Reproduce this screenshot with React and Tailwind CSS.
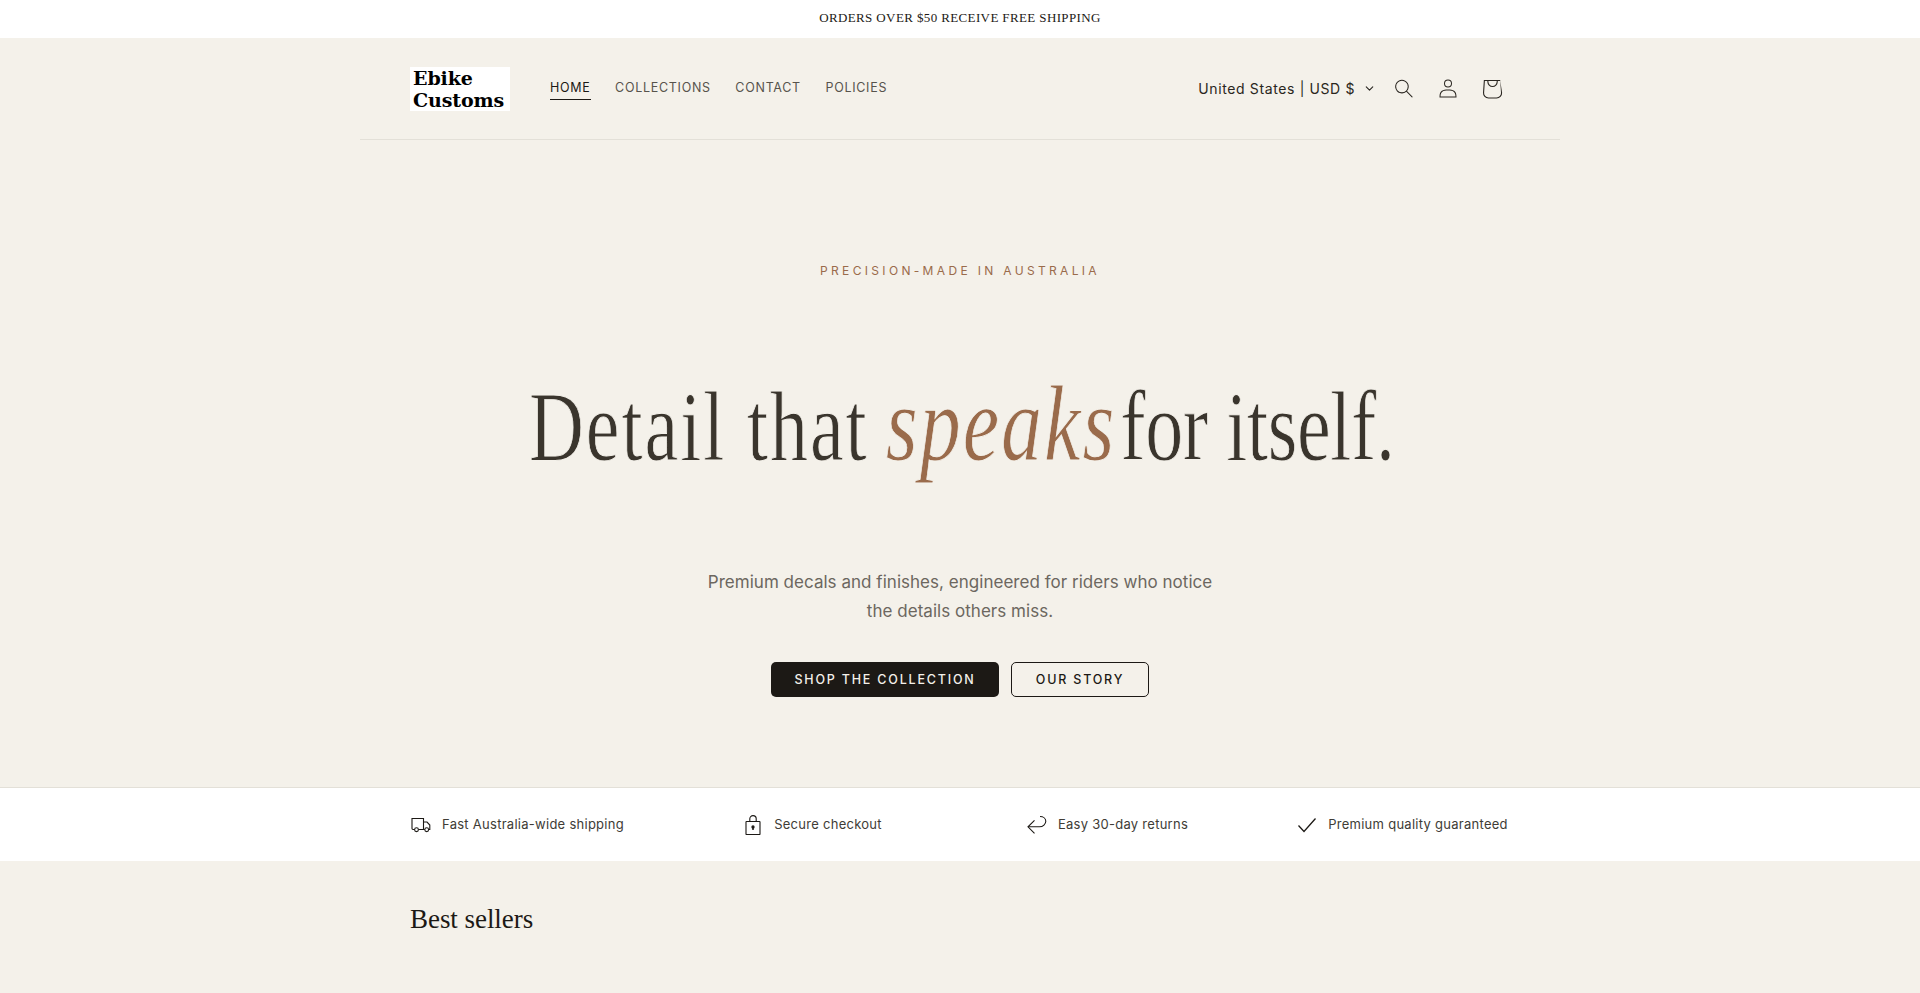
import { ChevronDown } from "lucide-react";

const navLinks = ["COLLECTIONS", "CONTACT", "POLICIES"];

function SearchIcon() {
  return (
    <svg viewBox="0 0 18 19" className="w-[18px] h-[19px]" fill="currentColor">
      <path
        fillRule="evenodd"
        clipRule="evenodd"
        d="M11.03 11.68A5.784 5.784 0 112.85 3.5a5.784 5.784 0 018.18 8.18zm.26 1.12a6.78 6.78 0 11.72-.7l5.4 5.4a.5.5 0 11-.71.7l-5.41-5.4z"
      />
    </svg>
  );
}

function AccountIcon() {
  return (
    <svg viewBox="0 0 18 19" className="w-[18px] h-[19px]" fill="currentColor">
      <path
        fillRule="evenodd"
        clipRule="evenodd"
        d="M6 4.5a3 3 0 116 0 3 3 0 01-6 0zm3-4a4 4 0 100 8 4 4 0 000-8zm5.58 12.15c1.12.82 1.83 2.24 1.91 4.85H1.51c.08-2.6.79-4.03 1.9-4.85C4.66 11.75 6.5 11.5 9 11.5s4.35.26 5.58 1.15zM9 10.5c-2.5 0-4.65.24-6.17 1.35C1.27 12.98.5 14.93.5 18v.5h17V18c0-3.07-.77-5.02-2.33-6.15-1.52-1.1-3.67-1.35-6.17-1.35z"
      />
    </svg>
  );
}

function CartIcon() {
  return (
    <svg viewBox="0 0 40 40" className="w-11 h-11" fill="currentColor">
      <path
        fillRule="evenodd"
        clipRule="evenodd"
        d="M15.75 11.8h-3.16l-.77 11.6a5 5 0 0 0 4.99 5.34h7.38a5 5 0 0 0 4.99-5.33L27.41 11.8zm0 1h-2.22l-.71 10.67a4 4 0 0 0 3.99 4.27h7.38a4 4 0 0 0 4-4.27l-.72-10.67h-2.22v.63a4.75 4.75 0 1 1-9.5 0zm8.5 0h-7.5v.63a3.75 3.75 0 1 0 7.5 0z"
      />
    </svg>
  );
}

function TruckIcon() {
  return (
    <svg viewBox="0 0 20 18" className="w-5 h-[18px]" fill="none" stroke="#1c1915" strokeWidth="1.1">
      <path d="M3.6 13.500H2a1 1 0 0 1-1-1V2.500h11.500v11H7.500" />
      <path d="M12.500 6h3.500l2.800 3v4.500h-1.300" />
      <path d="M13.800 13.500h-1.300" />
      <circle cx="5.500" cy="13.700" r="1.900" />
      <circle cx="15.700" cy="13.700" r="1.900" />
    </svg>
  );
}

function LockIcon() {
  return (
    <svg viewBox="0 0 20 20" className="w-5 h-5" fill="none" stroke="#1c1915" strokeWidth="1.1">
      <rect x="3" y="6.500" width="14" height="13" rx="0.5" />
      <path d="M6.800 6.500V3.800a3.200 3.200 0 0 1 6.400 0v2.700" />
      <circle cx="10" cy="12" r="1.100" fill="#1c1915" />
      <path d="M10 12v3" strokeWidth="1.500" />
    </svg>
  );
}

function ReturnIcon() {
  return (
    <svg viewBox="0 0 20 20" className="w-5 h-5" fill="none" stroke="#1c1915" strokeWidth="1.1">
      <path d="M13 1.500c3.200 0 5.800 2 5.800 4.800S16 11.800 12.500 11.800H1" />
      <path d="M7.500 5.300L1 11.800l6.500 6.500" />
    </svg>
  );
}

function CheckIcon() {
  return (
    <svg viewBox="0 0 20 20" className="w-5 h-5" fill="none" stroke="#1c1915" strokeWidth="1.300">
      <path d="M1.500 10.500l5.500 6L18.500 3.500" />
    </svg>
  );
}

const perks = [
  { icon: <TruckIcon />, label: "Fast Australia-wide shipping" },
  { icon: <LockIcon />, label: "Secure checkout" },
  { icon: <ReturnIcon />, label: "Easy 30-day returns" },
  { icon: <CheckIcon />, label: "Premium quality guaranteed" },
];

export default function App() {
  return (
    <div className="min-h-[993px] bg-[#f4f1ea] font-['Inter',sans-serif] text-[#1c1915] overflow-hidden">
      {/* announcement */}
      <div className="h-[38px] pb-[2px] bg-white flex items-center justify-center font-['Liberation_Serif',serif] text-[13px] tracking-[0.38px] text-[#1c1915]">
        ORDERS OVER $50 RECEIVE FREE SHIPPING
      </div>

      {/* header */}
      <header className="w-[1200px] ml-[360px] h-[102px] border-b border-[#e3e0d8] px-[50px] flex items-center justify-between">
        <div className="flex items-center">
          <div className="w-[100px] h-11 bg-white pl-[3px] font-['DejaVu_Serif',serif] font-bold text-[19px] leading-[22px] tracking-[-0.1px] text-black">
            Ebike
            <br />
            Customs
          </div>
          <nav className="ml-10 mt-[2px] flex items-center gap-[24.5px] text-[12.5px] tracking-[0.72px] text-[#57534c]">
            <a className="text-[#1c1915] border-b border-[#1c1915] pb-[1px]">HOME</a>
            {navLinks.map((link) => (
              <a key={link} className="pb-[2px]">
                {link}
              </a>
            ))}
          </nav>
        </div>
        <div className="flex items-center text-[#2a2620]">
          <div className="flex items-center text-[14px] tracking-[0.62px] mr-[6px]">
            United States | USD $
            <ChevronDown className="w-[13px] h-[13px] ml-2" strokeWidth={2} />
          </div>
          <div className="w-11 h-11 flex items-center justify-center"><SearchIcon /></div>
          <div className="w-11 h-11 flex items-center justify-center"><AccountIcon /></div>
          <div className="w-11 h-11 flex items-center justify-center -mr-[4px]"><CartIcon /></div>
        </div>
      </header>

      {/* hero */}
      <section className="h-[647px] flex flex-col items-center pt-[122px] text-center">
        <p className="text-[12px] leading-[18px] tracking-[3.33px] text-[#9a6b4b]">PRECISION-MADE IN AUSTRALIA</p>
        <h1 className="mt-[94px] h-[100px] pl-[5px] whitespace-nowrap font-['Liberation_Serif',serif] text-[100px] leading-[100px] text-[#3a352d] scale-x-[0.76] [-webkit-text-stroke:0.9px_#f4f1ea]">
          <span className="tracking-[2.5px]">Detail that </span>
          <em className="-ml-[5px] text-[108px] tracking-[2.6px] text-[#9a6b4b]">speaks</em>
          <span className="ml-[5px] tracking-[-0.5px]">for itself.</span>
        </h1>
        <p className="mt-[94px] text-[17px] tracking-[0.03px] leading-[29px] text-[#6c675f]">
          Premium decals and finishes, engineered for riders who notice
          <br />
          the details others miss.
        </p>
        <div className="mt-[36px] flex gap-3">
          <a className="w-[228px] h-[35px] pt-[1px] rounded-[5px] bg-[#1c1915] text-[#f4f1ea] flex items-center justify-center text-[12.5px] font-medium tracking-[1.8px]">
            SHOP THE COLLECTION
          </a>
          <a className="w-[138px] h-[35px] pt-[1px] rounded-[5px] border border-[#1c1915] flex items-center justify-center text-[12.5px] font-medium tracking-[1.8px]">
            OUR STORY
          </a>
        </div>
      </section>

      {/* perks */}
      <div className="h-[74px] pt-[1px] bg-white border-t border-[#e3e0d8]">
        <div className="w-[1180px] h-full mx-auto grid grid-cols-4 justify-items-center items-center">
          {perks.map((perk) => (
            <div key={perk.label} className="flex items-center gap-[11px] text-[13px] tracking-[0.27px] text-[#403c36]">
              {perk.icon}
              {perk.label}
            </div>
          ))}
        </div>
      </div>

      {/* best sellers */}
      <section className="w-[1100px] mx-auto pt-[40px]">
        <h2 className="font-['Liberation_Serif',serif] text-[27px] leading-[36px] tracking-[-0.05px] text-[#1c1915]">Best sellers</h2>
      </section>
    </div>
  );
}
